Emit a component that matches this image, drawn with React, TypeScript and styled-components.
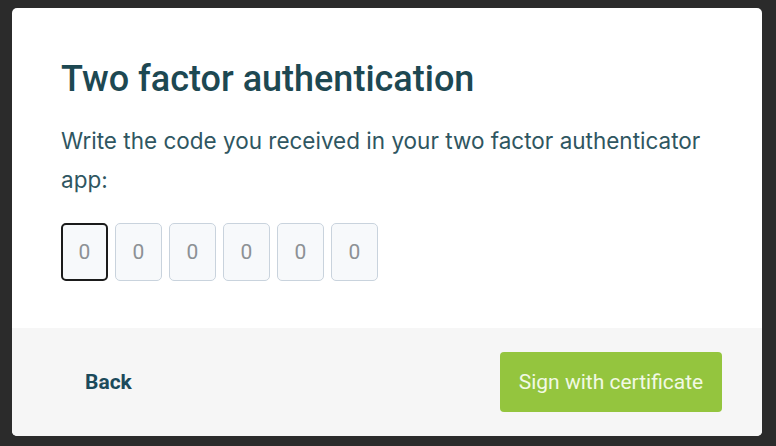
import React from 'react';
import styled, { createGlobalStyle } from 'styled-components';

const GlobalStyle = createGlobalStyle`
  html, body {
    margin: 0;
    padding: 0;
    background: #2b2b2b;
  }
  body {
    font-family: Roboto, 'Liberation Sans', sans-serif;
  }
`;

const Backdrop = styled.div`
  width: 776px;
  height: 446px;
  box-sizing: border-box;
  padding: 8px 14px 10px 12px;
  background: #2b2b2b;
`;

const Modal = styled.div`
  width: 750px;
  height: 428px;
  background: #ffffff;
  border-radius: 5px;
  overflow: hidden;
  display: flex;
  flex-direction: column;
`;

const Body = styled.div`
  flex: 1;
  padding: 50px 49px 0 49px;
`;

const Title = styled.h1`
  margin: 0;
  font-family: Roboto, 'Liberation Sans', sans-serif;
  font-weight: 500;
  font-size: 36px;
  line-height: 42px;
  color: #1d4852;
`;

const Text = styled.p`
  margin: 21px 0 0;
  font-family: Inter, 'Noto Sans', sans-serif;
  font-size: 22.5px;
  line-height: 39px;
  color: #2f5661;
`;

const Code = styled.div`
  display: flex;
  gap: 7px;
  margin-top: 24px;
`;

const Digit = styled.input<{ $active?: boolean }>`
  width: 47px;
  height: 58px;
  box-sizing: border-box;
  border-radius: 5px;
  border: ${(p) => (p.$active ? '2px solid #1b1b1b' : '1px solid #c9d3dd')};
  background: #f7f9fb;
  text-align: center;
  font-family: Roboto, 'Liberation Sans', sans-serif;
  font-size: 21px;
  color: #8a8f93;
  outline: none;
  padding: 0;
  &::placeholder {
    color: #8c9195;
  }
`;

const Footer = styled.div`
  height: 108px;
  background: #f6f6f6;
  display: flex;
  align-items: center;
  justify-content: space-between;
  padding: 0 40px 0 49px;
`;

const BackButton = styled.button`
  background: none;
  border: none;
  padding: 0 24px;
  height: 60px;
  font-family: Roboto, 'Liberation Sans', sans-serif;
  font-weight: 700;
  font-size: 21px;
  color: #1b4a5b;
  cursor: pointer;
`;

const SignButton = styled.button`
  width: 222px;
  height: 60px;
  border: none;
  border-radius: 4px;
  background: #94c53e;
  font-family: Roboto, 'Liberation Sans', sans-serif;
  font-size: 21px;
  color: #f1f9e4;
  cursor: pointer;
`;

export default function App() {
  return (
    <>
      <GlobalStyle />
      <Backdrop>
        <Modal>
          <Body>
            <Title>Two factor authentication</Title>
            <Text>
              Write the code you received in your two factor authenticator app:
            </Text>
            <Code>
              {[0, 1, 2, 3, 4, 5].map((i) => (
                <Digit key={i} $active={i === 0} placeholder="0" maxLength={1} />
              ))}
            </Code>
          </Body>
          <Footer>
            <BackButton>Back</BackButton>
            <SignButton>Sign with certificate</SignButton>
          </Footer>
        </Modal>
      </Backdrop>
    </>
  );
}
